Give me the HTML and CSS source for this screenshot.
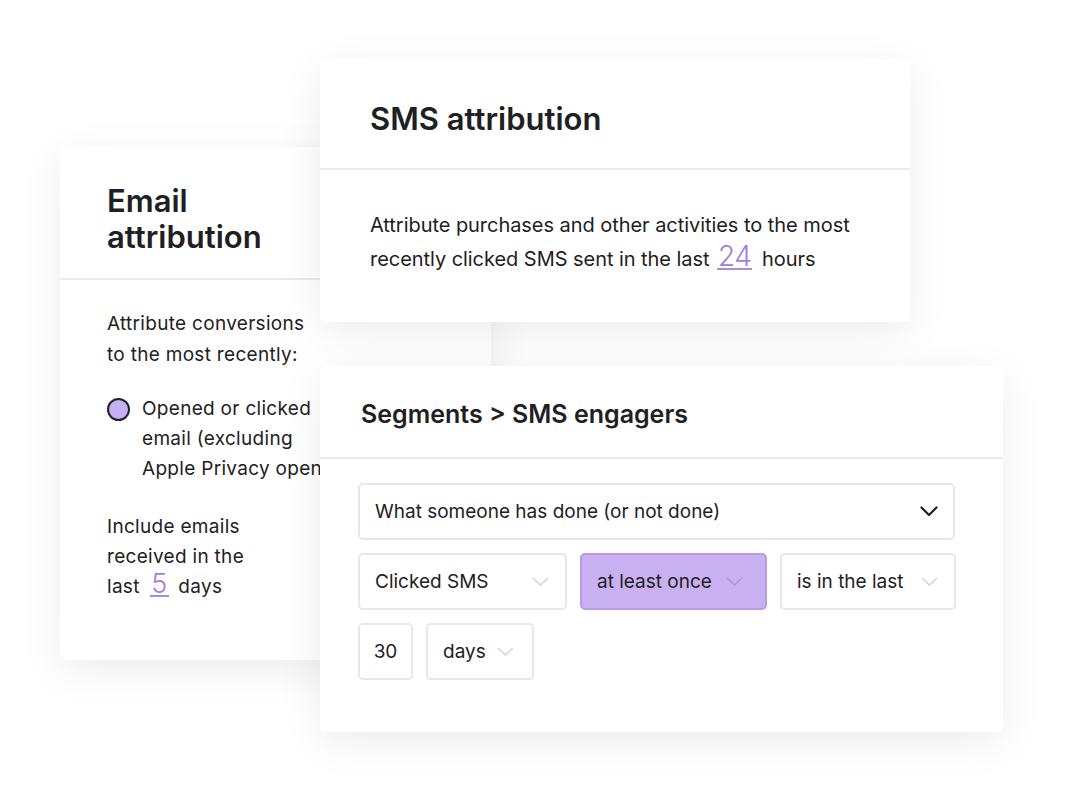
FILE: index.html
```html
<!DOCTYPE html>
<html lang="en">
<head>
<meta charset="utf-8">
<title>Attribution</title>
<link rel="stylesheet" href="styles.css">
</head>
<body>
<div class="canvas">
  <section class="card email-card">
    <header class="card-head email-head">
      <h2 class="email-title">Email<br>attribution</h2>
    </header>
    <div class="email-body">
      <p class="email-text">Attribute conversions to the most recently:</p>
      <div class="radio-row">
        <span class="radio"></span>
        <span class="radio-label">Opened or clicked email (excluding Apple Privacy opens)</span>
      </div>
      <p class="email-text include">Include emails received in the last <span class="num num-small">5</span> days</p>
    </div>
  </section>

  <section class="card sms-card">
    <header class="card-head sms-head">
      <h2 class="sms-title">SMS attribution</h2>
    </header>
    <div class="sms-body">
      <p class="sms-text">Attribute purchases and other activities to the most recently clicked SMS sent in the last <span class="num num-big">24</span> hours</p>
    </div>
  </section>

  <section class="card seg-card">
    <header class="card-head seg-head">
      <h2 class="seg-title">Segments &gt; SMS engagers</h2>
    </header>
    <div class="seg-body">
      <div class="field field-main">
        <span>What someone has done (or not done)</span>
        <svg class="chev-dark" width="18" height="11" viewBox="0 0 18 11"><path d="M1.5 1.5 L9 9 L16.5 1.5" fill="none" stroke="#1f2024" stroke-width="2.2" stroke-linecap="round" stroke-linejoin="round"/></svg>
      </div>
      <div class="row">
        <div class="field w-clicked"><span>Clicked SMS</span><svg class="chev" width="17" height="9" viewBox="0 0 17 9"><path d="M1 1 L8.5 8 L16 1" fill="none" stroke="#d4d4d6" stroke-width="1.6"/></svg></div>
        <div class="field field-active w-once"><span>at least once</span><svg class="chev" width="17" height="9" viewBox="0 0 17 9"><path d="M1 1 L8.5 8 L16 1" fill="none" stroke="#ae96de" stroke-width="1.6"/></svg></div>
        <div class="field w-last"><span>is in the last</span><svg class="chev" width="17" height="9" viewBox="0 0 17 9"><path d="M1 1 L8.5 8 L16 1" fill="none" stroke="#d4d4d6" stroke-width="1.6"/></svg></div>
      </div>
      <div class="row">
        <div class="field w-num"><span>30</span></div>
        <div class="field w-days"><span>days</span><svg class="chev" width="17" height="9" viewBox="0 0 17 9"><path d="M1 1 L8.5 8 L16 1" fill="none" stroke="#d4d4d6" stroke-width="1.6"/></svg></div>
      </div>
    </div>
  </section>
</div>
</body>
</html>
```

FILE: styles.css
```css
* { box-sizing: border-box; }
html, body { margin: 0; padding: 0; background: #ffffff; }
body {
  font-family: Inter, "Noto Sans", "Liberation Sans", sans-serif;
  color: #1f2024;
}
.canvas {
  position: relative;
  width: 1067px;
  height: 800px;
  overflow: hidden;
}
.card {
  position: absolute;
  background: #ffffff;
  border-radius: 6px;
  box-shadow: 0 10px 44px rgba(0, 0, 0, 0.075);
  overflow: hidden;
}
.card-head { border-bottom: 2px solid #ebebeb; }
h2 { margin: 0; }
p { margin: 0; }

/* Email card */
.email-card { left: 60px; top: 147px; width: 431px; height: 513px; z-index: 1; }
.email-head { padding: 36px 47px 23px; }
.email-title {
  font-size: 31px; line-height: 36px; font-weight: 600; letter-spacing: 0;
}
.email-body { padding: 28px 47px 0; }
.email-text {
  font-size: 19px; line-height: 31px; width: 212px; letter-spacing: 0.3px;
}
.radio-row { display: flex; gap: 12px; margin-top: 24px; }
.radio {
  flex: none; width: 23px; height: 23px; margin-top: 4px;
  border-radius: 50%; background: #c6aef2; border: 2.5px solid #222226;
}
.radio-label {
  font-size: 19px; line-height: 30px; width: 205px; letter-spacing: 0.3px;
}
.include { line-height: 30px; margin-top: 28px; width: 150px; }

.num {
  display: inline-block; color: #9d80dc; font-weight: 300;
  border-bottom: 2px solid #a78be0;
}
.num-small { font-size: 27px; line-height: 22px; margin: 0 4px 0 5px; padding: 0 1px; }
.num-big { font-size: 28px; line-height: 24px; margin: 0 4px 0 2px; padding: 0 1px; letter-spacing: -0.5px; }

/* SMS card */
.sms-card { left: 320px; top: 59px; width: 590px; height: 263px; z-index: 2; }
.sms-head { padding: 40px 50px 29px; }
.sms-title { font-size: 31px; line-height: 40px; font-weight: 600; letter-spacing: 0; }
.sms-body { padding: 38px 50px 0; }
.sms-text { font-size: 20px; line-height: 34px; letter-spacing: -0.05px; }

/* Segments card */
.seg-card { left: 320px; top: 366px; width: 683px; height: 366px; z-index: 3; }
.seg-head { padding: 32px 41px 27px; }
.seg-title { font-size: 25px; line-height: 32px; font-weight: 600; letter-spacing: 0; }
.seg-body { padding: 24px 38px 0; display: flex; flex-direction: column; gap: 13px; }
.row { display: flex; gap: 13px; }
.field {
  height: 57px; border: 2px solid #e8e8e8; border-radius: 5px;
  display: flex; align-items: center; justify-content: space-between;
  padding: 0 16px 0 15px; font-size: 19px; letter-spacing: 0; background: #fff;
}
.field-main { width: 597px; padding-right: 15px; }
.field-active { background: #c8b0f1; border-color: #b79de8; }
.w-clicked { width: 209px; }
.w-once { width: 187px; padding-right: 22px; }
.w-last { width: 176px; }
.w-num { width: 55px; justify-content: center; padding: 0; }
.w-days { width: 108px; padding-left: 15px; padding-right: 18px; }
.chev, .chev-dark { flex: none; }
```
